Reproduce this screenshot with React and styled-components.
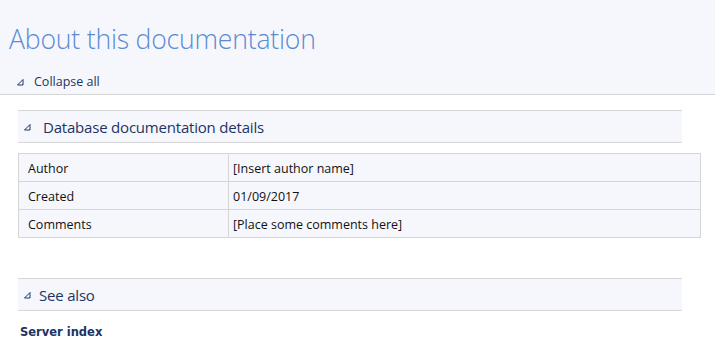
import React from "react"
import styled, { createGlobalStyle } from "styled-components"

const GlobalStyle = createGlobalStyle`
  html, body {
    margin: 0;
    padding: 0;
    background: #ffffff;
    font-family: "Open Sans", "Liberation Sans", sans-serif;
  }
`

const details = [
  { label: "Author", value: "[Insert author name]" },
  { label: "Created", value: "01/09/2017" },
  { label: "Comments", value: "[Place some comments here]" },
]

const Toggle = ({ size = 6 }) => (
  <svg width={size + 1} height={size + 1} viewBox="0 0 7 7">
    <path d="M6 0.5 L6 6 L0.5 6 Z" fill="none" stroke="#1c3463" strokeWidth="1" />
  </svg>
)

const App = () => {
  return (
    <Page>
      <GlobalStyle />
      <Header>
        <Title>About this documentation</Title>
        <CollapseAll>
          <Toggle />
          <span>Collapse all</span>
        </CollapseAll>
      </Header>
      <Content>
        <Section>
          <SectionHeader>
            <Toggle />
            <SectionTitle>Database documentation details</SectionTitle>
          </SectionHeader>
          <Table>
            <tbody>
              {details.map(row => (
                <tr key={row.label}>
                  <LabelCell>{row.label}</LabelCell>
                  <Cell>{row.value}</Cell>
                </tr>
              ))}
            </tbody>
          </Table>
        </Section>
        <Section>
          <SectionHeader $gap={8}>
            <Toggle />
            <SectionTitle>See also</SectionTitle>
          </SectionHeader>
          <LinkTitle>Server index</LinkTitle>
        </Section>
      </Content>
    </Page>
  )
}
export default App

const Page = styled.div`
  width: 715px;
  min-height: 357px;
  background: #ffffff;
`

const Header = styled.div`
  background: #f6f7fd;
  border-bottom: 1px solid #d6d6d6;
  padding: 19px 0 0 9px;
  height: 75px;
  box-sizing: content-box;
`

const Title = styled.h1`
  margin: 0;
  font-family: "Open Sans", sans-serif;
  font-weight: 300;
  font-size: 26.6px;
  line-height: 40px;
  color: #5b8bd2;
  letter-spacing: -0.2px;
`

const CollapseAll = styled.div`
  display: flex;
  align-items: center;
  gap: 10px;
  margin: 15px 0 0 8px;
  font-size: 12.5px;
  line-height: 16px;
  color: #1c3463;
`

const Content = styled.div`
  padding: 15px 14px 0 18px;
  display: flex;
  flex-direction: column;
  gap: 40px;
`

const Section = styled.div`
  display: flex;
  flex-direction: column;
`

const SectionHeader = styled.div`
  width: 664px;
  display: flex;
  align-items: center;
  gap: ${p => p.$gap || 12}px;
  padding: 1px 0 0 6px;
  box-sizing: border-box;
  height: 33px;
  background: #f6f7fd;
  border-top: 1px solid #d6d6d6;
  border-bottom: 1px solid #d6d6d6;
`

const SectionTitle = styled.span`
  font-size: 15px;
  color: #1c3463;
  letter-spacing: -0.2px;
`

const Table = styled.table`
  margin-top: 10px;
  width: 683px;
  border-collapse: collapse;
  background: #f6f7fd;
  border: 1px solid #d6d6d6;
  font-size: 12.5px;
  color: #111111;
`

const Cell = styled.td`
  height: 26px;
  padding: 1px 0 0 4px;
  border: 1px solid #d6d6d6;
  vertical-align: middle;
`

const LabelCell = styled(Cell)`
  width: 200px;
  padding-left: 9px;
`

const LinkTitle = styled.div`
  margin: 14px 0 0 2px;
  font-family: "DejaVu Sans", Verdana, sans-serif;
  font-weight: bold;
  font-size: 11.5px;
  color: #1c3463;
`
